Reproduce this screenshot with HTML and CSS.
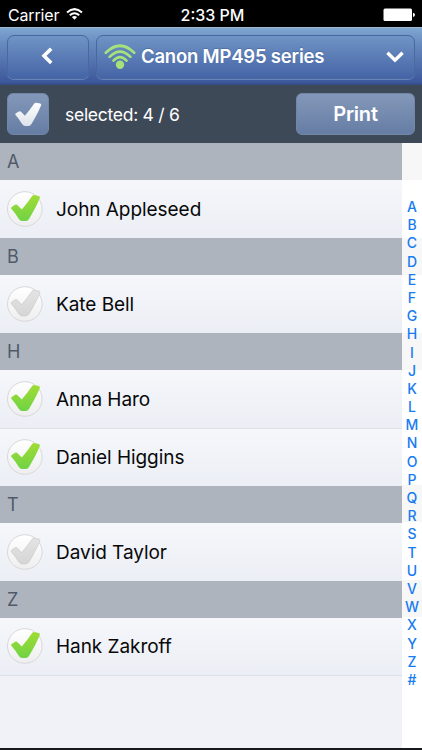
FILE: index.html
```html
<!DOCTYPE html>
<html lang="en">
<head>
<meta charset="utf-8">
<title>Print contacts</title>
<link rel="stylesheet" href="styles.css">
</head>
<body>
<svg class="defs" width="0" height="0" aria-hidden="true">
  <defs>
    <linearGradient id="disc" x1="0" y1="0" x2="0" y2="1"><stop offset="0" stop-color="#fff"/><stop offset="1" stop-color="#eeeeee"/></linearGradient>
    <linearGradient id="green" x1="0" y1="0" x2="0" y2="1"><stop offset="0" stop-color="#a0dc35"/><stop offset="1" stop-color="#70d344"/></linearGradient>
    <linearGradient id="grey" x1="0" y1="0" x2="0" y2="1"><stop offset="0" stop-color="#e4e4e5"/><stop offset="1" stop-color="#d5d5d6"/></linearGradient>
    <linearGradient id="white" x1="0" y1="0" x2="0" y2="1"><stop offset="0" stop-color="#fff"/><stop offset="1" stop-color="#dde2ea"/></linearGradient>
    <path id="tick" d="M4.4 17.4Q3.9 16.4 5 15.7L8.3 13.6Q9.7 12.8 10.7 14L15 18.4Q20.4 12 25 5.3Q26.3 3.6 27.9 4L32 4.9Q33.6 5.4 32.9 7C30.2 13.5 26.7 20.2 22.5 27.2Q21 29.8 18.9 29.8H15.3Q13.4 29.8 12.1 27.8Q8.7 22.5 4.4 17.4Z"/>
    <symbol id="on" viewBox="0 0 38 38"><circle cx="18.8" cy="19" r="17.3" fill="url(#disc)" stroke="#d8d8da"/><use href="#tick" x=".8" y="1.2" fill="url(#green)"/></symbol>
    <symbol id="off" viewBox="0 0 38 38"><circle cx="18.8" cy="19" r="17.3" fill="url(#disc)" stroke="#d8d8da"/><use href="#tick" x=".8" y="1.2" fill="url(#grey)" stroke="#c6c6c8" stroke-width=".6"/></symbol>
  </defs>
</svg>
<div class="screen">
  <div class="status">
    <div class="carrier"><span class="carrier-name">Carrier</span>
      <svg width="17" height="12" viewBox="0 0 17 12" fill="none" stroke="#fff" stroke-width="2"><path d="M1 4.4Q8.5-2.2 16 4.4M3.8 7.2Q8.5 3.2 13.2 7.2"/><path d="M5.9 9.1Q8.5 7 11.1 9.1L8.5 11.8Z" fill="#fff" stroke="none"/></svg>
    </div>
    <span class="time">2:33 PM</span>
    <svg class="battery" width="33" height="14" viewBox="0 0 33 14"><rect x=".5" y=".5" width="28.5" height="12.5" rx="1.5" fill="#fff"/><path d="M30 4.7Q32 5 32 6.8T30 8.9Z" fill="#fff"/></svg>
  </div>
  <header class="nav">
    <div class="nav-button back">
      <svg width="12" height="18" viewBox="0 0 12 18" fill="none" stroke="#fff" stroke-width="3.6"><path d="M10.2 1.7L3 8.8L10.2 16"/></svg>
    </div>
    <div class="nav-button printer">
      <svg class="signal" width="32" height="26" viewBox="0 0 32 26" fill="none" stroke="#a5e27c" stroke-width="2.7" stroke-linecap="round"><path d="M1.8 8.7Q16-5.3 30.2 8.7M5.6 12.9Q16 2.3 26.4 12.9M9.5 16.6Q16 9.8 22.5 16.6"/><circle cx="16" cy="20.8" r="4.2" fill="#a5e27c" stroke="none"/></svg>
      <span class="printer-name">Canon MP495 series</span>
      <svg class="chevron" width="18" height="12" viewBox="0 0 18 12" fill="none" stroke="#fff" stroke-width="3.4"><path d="M1.4 1.7L9 9.2L16.6 1.7"/></svg>
    </div>
  </header>
  <div class="toolbar">
    <div class="button all"><svg width="27" height="25" viewBox="4 3.5 30 27"><use href="#tick" fill="url(#white)"/></svg></div>
    <span class="count">selected: 4 / 6</span>
    <div class="button print"><span class="print-label">Print</span></div>
  </div>
  <main class="content">
    <div class="list">
      <div class="section">A</div>
      <div class="row"><svg><use href="#on"/></svg><span>John Appleseed</span></div>
      <div class="section">B</div>
      <div class="row"><svg><use href="#off"/></svg><span>Kate Bell</span></div>
      <div class="section">H</div>
      <div class="row"><svg><use href="#on"/></svg><span>Anna Haro</span></div>
      <div class="row divided"><svg><use href="#on"/></svg><span>Daniel Higgins</span></div>
      <div class="section">T</div>
      <div class="row"><svg><use href="#off"/></svg><span>David Taylor</span></div>
      <div class="section">Z</div>
      <div class="row last"><svg><use href="#on"/></svg><span>Hank Zakroff</span></div>
    </div>
    <nav class="index">
      <span>A</span><span>B</span><span>C</span><span>D</span><span>E</span><span>F</span><span>G</span><span>H</span><span>I</span><span>J</span><span>K</span><span>L</span><span>M</span><span>N</span><span>O</span><span>P</span><span>Q</span><span>R</span><span>S</span><span>T</span><span>U</span><span>V</span><span>W</span><span>X</span><span>Y</span><span>Z</span><span>#</span>
    </nav>
  </main>
</div>
</body>
</html>
```
FILE: styles.css
```css
* { box-sizing: border-box; }
body { margin: 0; font-family: Inter, "Liberation Sans", sans-serif; background: #f0f2f7; }
.defs { position: absolute; }
.screen { width: 422px; height: 750px; display: flex; flex-direction: column; overflow: hidden; border-bottom: 2px solid #17191c; white-space: nowrap; }
.status { height: 27px; background: #000; color: #fff; display: grid; grid-template-columns: 1fr auto 1fr; align-items: center; padding: 2px 6px 0 8px; font-size: 16px; }
.carrier { display: flex; align-items: center; gap: 7px; letter-spacing: -.15px; }
.carrier svg { margin-top: -2px; }
.time { font-weight: 500; margin-left: 1px; }
.battery { justify-self: end; }
.nav { height: 58px; display: flex; gap: 7px; padding: 7px 7px 6px; background: linear-gradient(#7fa6d1, #6588bd 30%, #3d589b 95%, #334b83); border-top: 1px solid #a1b8cf; }
.nav-button { height: 44px; border: 1px solid #48689f; border-radius: 7px; background: linear-gradient(#7094c5, #4564a6); box-shadow: 0 1px 0 #6583b8; display: flex; align-items: center; }
.back { width: 82px; justify-content: center; padding-right: 2px; }
.back svg { margin-top: -2px; }
.printer { flex: 1; padding: 0 10px 0 7px; }
.signal { flex: none; margin-top: -1px; }
.printer-name { margin: -2px 0 0 5px; color: #fff; font-size: 18.5px; font-weight: 600; letter-spacing: -.2px; text-shadow: 0 -1px 1px #344f8166; }
.chevron { margin: -1px 0 0 auto; }
.toolbar { height: 58px; background: #3e4957; display: flex; align-items: center; padding: 0 7px; }
.button { height: 42px; border-radius: 6px; background: linear-gradient(#8398b9, #667da4); border: 1px solid #7187aa; display: flex; align-items: center; justify-content: center; }
.all { width: 42px; }
.count { margin-left: 16px; color: #fff; font-size: 17.5px; letter-spacing: -.27px; }
.print { width: 119px; margin-left: auto; color: #fff; font-size: 20px; font-weight: 600; letter-spacing: -.2px; }
.content { flex: 1; display: flex; min-height: 0; }
.list { width: 402px; padding-top: .3px; }
.section { height: 37px; background: #adb4bd; color: #505a69; font-size: 18px; line-height: 38px; padding-left: 7px; }
.row { height: 57.9px; display: flex; align-items: center; background: linear-gradient(#f5f7fb, #ebeef4); color: #080808; font-size: 19px; letter-spacing: -.05px; padding-left: 6px; }
.row svg { width: 38px; height: 38px; margin-right: 12px; }
.row span { padding-top: .6px; }
.divided { border-top: 1px solid #dde1e8; }
.last { border-bottom: 1px solid #dde1e8; }
.index { width: 20px; background: linear-gradient(#f7f7f7 0 37px, #fff 37px 95px, #f7f7f7 95px 132px, #fff 132px 190px, #f7f7f7 190px 227px, #fff 227px 342px, #f7f7f7 342px 379px, #fff 379px 437px, #f7f7f7 437px 474px, #fff 474px); color: #177bf2; padding-top: 55px; font-size: 14px; font-weight: 500; text-align: center; }
.index span { display: block; height: 18.2px; line-height: 18.2px; }
```
